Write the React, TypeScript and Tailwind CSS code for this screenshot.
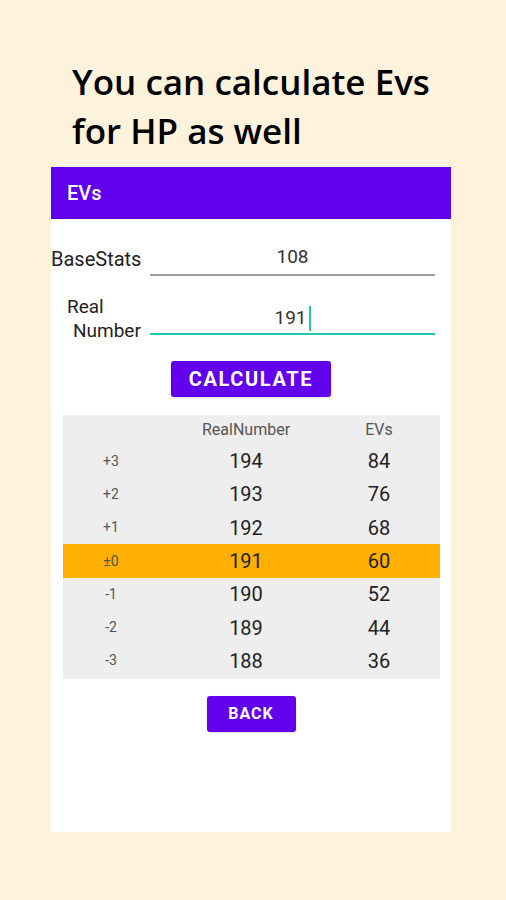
import React from 'react'

const rows = [
  { diff: '+3', real: '194', evs: '84' },
  { diff: '+2', real: '193', evs: '76' },
  { diff: '+1', real: '192', evs: '68' },
  { diff: '±0', real: '191', evs: '60', active: true },
  { diff: '-1', real: '190', evs: '52' },
  { diff: '-2', real: '189', evs: '44' },
  { diff: '-3', real: '188', evs: '36' },
]

export default function App() {
  return (
    <div className="h-[900px] w-[506px] overflow-hidden bg-[#fdf3dc] font-['Roboto',sans-serif]">
      <h1 className="pl-[72px] pt-[57px] font-['Open_Sans',sans-serif] text-[35px] font-semibold leading-[49px] text-black">
        You can calculate Evs
        <br />
        for HP as well
      </h1>

      <div className="ml-[51px] mt-[12px] h-[665px] w-[400px] bg-white">
        <div className="flex h-[52px] items-center bg-[#6200ee] pl-4 text-[20px] font-medium text-white">
          EVs
        </div>

        <div className="mt-[24px] flex items-end">
          <span className="w-[99px] pb-[2px] text-[20px] text-[#222]">BaseStats</span>
          <div className="w-[285px] border-b-2 border-[#9e9e9e] pb-[2px] text-center text-[19px] text-[#333]">
            108
          </div>
        </div>

        <div className="mt-[19px] flex items-start">
          <span className="w-[99px] text-[19px] leading-[24px] text-[#222]">
            <span className="block pl-[16px]">Real</span>
            <span className="block pl-[22px]">Number</span>
          </span>
          <div className="mt-[9px] flex h-[31px] w-[285px] items-center justify-center border-b-2 border-[#1fc9b6] text-[19px] text-[#333]">
            <span>191</span>
            <span className="ml-[2px] h-[25px] w-[2px] bg-[#1fc9b6]" />
          </div>
        </div>

        <div className="mt-[18px] flex justify-center">
          <button className="h-[36px] w-[160px] rounded-[3px] bg-[#6200ee] text-[20px] font-bold tracking-[0.08em] text-white shadow-sm">
            CALCULATE
          </button>
        </div>

        <div className="ml-[12px] mt-[18px] w-[377px] bg-[#eeeeee] pb-[1px]">
          <div className="flex h-[30px] items-center text-[16px] text-[#555]">
            <span className="w-[96px]" />
            <span className="w-[174px] text-center">RealNumber</span>
            <span className="w-[92px] text-center">EVs</span>
          </div>
          {rows.map((row) => (
            <div
              key={row.diff}
              className={
                row.active
                  ? 'flex h-[33.3px] items-center bg-[#ffb000]'
                  : 'flex h-[33.3px] items-center'
              }
            >
              <span className="w-[96px] text-center text-[14px] text-[#555]">{row.diff}</span>
              <span className="w-[174px] text-center text-[20px] text-[#222]">{row.real}</span>
              <span className="w-[92px] text-center text-[20px] text-[#222]">{row.evs}</span>
            </div>
          ))}
        </div>

        <div className="mt-[17px] flex justify-center">
          <button className="h-[36px] w-[89px] rounded-[3px] bg-[#6200ee] text-[16px] font-bold tracking-[0.06em] text-white shadow-sm">
            BACK
          </button>
        </div>
      </div>
    </div>
  )
}
